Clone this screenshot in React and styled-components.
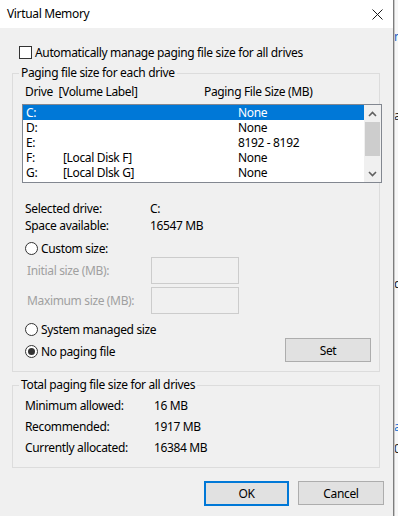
import React from 'react';
import styled, { createGlobalStyle } from 'styled-components';

const drives = [
  { drive: 'C:', label: '', size: 'None' },
  { drive: 'D:', label: '', size: 'None' },
  { drive: 'E:', label: '', size: '8192 - 8192' },
  { drive: 'F:', label: '[Local Disk F]', size: 'None' },
  { drive: 'G:', label: '[Local Dlsk G]', size: 'None' },
];

const totals = [
  ['Minimum allowed:', '16 MB'],
  ['Recommended:', '1917 MB'],
  ['Currently allocated:', '16384 MB'],
];

function CloseIcon() {
  return (
    <svg width="11" height="11" viewBox="0 0 11 11">
      <path d="M0.5 0.5 L10.5 10.5 M10.5 0.5 L0.5 10.5" stroke="#1a1a1a" strokeWidth="1" fill="none" />
    </svg>
  );
}

function Chevron({ down }) {
  return (
    <svg width="9" height="6" viewBox="0 0 9 6">
      <path d={down ? 'M1 1 L4.5 4.5 L8 1' : 'M1 5 L4.5 1.5 L8 5'} stroke="#606060" strokeWidth="1.6" fill="none" />
    </svg>
  );
}

export default function App() {
  return (
    <Screen>
      <GlobalStyle />
      <Dialog>
        <TitleBar>
          <Title>Virtual Memory</Title>
          <CloseBtn><CloseIcon /></CloseBtn>
        </TitleBar>
        <Body>
          <CheckRow>
            <CheckBox />
            <span>Automatically manage paging file size for all drives</span>
          </CheckRow>

          <GroupBox $top={13}>
            <GroupTitle>Paging file size for each drive</GroupTitle>
            <HeaderRow>
              <span>Drive&nbsp;&nbsp;[Volume Label]</span>
              <span>Paging File Size (MB)</span>
            </HeaderRow>
            <ListBox>
              <ListRows>
                {drives.map((d, i) => (
                  <ListRow key={d.drive} $selected={i === 0}>
                    <span>{d.drive}</span>
                    <span>{d.label}</span>
                    <span>{d.size}</span>
                  </ListRow>
                ))}
              </ListRows>
              <ScrollBar>
                <ArrowBox><Chevron /></ArrowBox>
                <Thumb />
                <Track />
                <ArrowBox><Chevron down /></ArrowBox>
              </ScrollBar>
            </ListBox>

            <InfoGrid>
              <span>Selected drive:</span>
              <span>C:</span>
              <span>Space available:</span>
              <span>16547 MB</span>
            </InfoGrid>

            <RadioRow $top={6}>
              <Radio />
              <span>Custom size:</span>
            </RadioRow>
            <SizeRow $top={1}>
              <DisabledLabel>Initial size (MB):</DisabledLabel>
              <DisabledInput />
            </SizeRow>
            <SizeRow $top={3}>
              <DisabledLabel>Maximum size (MB):</DisabledLabel>
              <DisabledInput />
            </SizeRow>
            <RadioRow $top={7}>
              <Radio />
              <span>System managed size</span>
            </RadioRow>
            <SetRow>
              <RadioInline>
                <Radio $checked />
                <span>No paging file</span>
              </RadioInline>
              <Button $w={86}>Set</Button>
            </SetRow>
          </GroupBox>

          <GroupBox $top={13}>
            <GroupTitle>Total paging file size for all drives</GroupTitle>
            <TotalGrid>
              {totals.map(([k, v]) => (
                <React.Fragment key={k}>
                  <span>{k}</span>
                  <span>{v}</span>
                </React.Fragment>
              ))}
            </TotalGrid>
          </GroupBox>

          <ButtonRow>
            <Button $w={85} $default>OK</Button>
            <Button $w={86}>Cancel</Button>
          </ButtonRow>
        </Body>
      </Dialog>
      <Behind>
        <Frag $h={44} $c="#1f5fbf">n</Frag>
        <Frag $h={79} $c="#222">a</Frag>
        <Frag $h={168} $c="#222">d</Frag>
        <Frag $h={143} $c="#1f6fd0">a</Frag>
        <Frag $h={22} $c="#222">0</Frag>
      </Behind>
    </Screen>
  );
}

const GlobalStyle = createGlobalStyle`
  html, body {
    margin: 0;
    padding: 0;
    overflow: hidden;
    background: #ffffff;
  }
  body {
    font-family: "Noto Sans", "Liberation Sans", sans-serif;
    font-size: 12px;
    letter-spacing: -0.35px;
    color: #000;
  }
`;

const Screen = styled.div`
  display: flex;
  width: 398px;
  height: 516px;
  overflow: hidden;
`;

const Dialog = styled.div`
  width: 393px;
  flex: none;
  display: flex;
  flex-direction: column;
  background: #f0f0f0;
  border-right: 1px solid #7d7d7d;
`;

const TitleBar = styled.div`
  height: 28px;
  background: #ffffff;
  display: flex;
  align-items: center;
  justify-content: space-between;
  padding: 0 10px 2px 7px;
  box-sizing: border-box;
`;

const Title = styled.span`
  font-size: 12px;
  color: #000;
`;

const CloseBtn = styled.div`
  display: flex;
  align-items: center;
  padding-top: 2px;
`;

const Body = styled.div`
  padding: 0 9px 0 12px;
  display: flex;
  flex-direction: column;
`;

const CheckRow = styled.div`
  display: flex;
  align-items: center;
  gap: 3px;
  height: 16px;
  margin-top: 16px;
  padding-left: 7px;
`;

const CheckBox = styled.span`
  width: 11px;
  height: 11px;
  border: 1px solid #333;
  background: #fff;
  flex: none;
`;

const GroupBox = styled.div`
  margin-top: ${p => p.$top}px;
  width: 368px;
  box-sizing: border-box;
  border: 1px solid #dcdcdc;
  display: flex;
  flex-direction: column;
  padding-bottom: 9px;
`;

const GroupTitle = styled.div`
  margin: -9px 0 0 6px;
  padding: 0 2px;
  width: fit-content;
  line-height: 16px;
  background: #f0f0f0;
`;

const HeaderRow = styled.div`
  display: grid;
  grid-template-columns: 179px auto;
  height: 16px;
  line-height: 16px;
  margin-top: 3px;
  padding-left: 12px;
`;

const ListBox = styled.div`
  margin: 4px 0 0 9px;
  width: 360px;
  height: 79px;
  box-sizing: border-box;
  border: 1px solid #828790;
  background: #fff;
  display: flex;
`;

const ListRows = styled.div`
  flex: 1;
  display: flex;
  flex-direction: column;
`;

const ListRow = styled.div`
  display: grid;
  grid-template-columns: 37px 175px auto;
  height: 15px;
  line-height: 15px;
  padding-left: 3px;
  overflow: hidden;
  background: ${p => (p.$selected ? '#0078d7' : 'transparent')};
  color: ${p => (p.$selected ? '#fff' : '#000')};
`;

const ScrollBar = styled.div`
  width: 17px;
  flex: none;
  background: #f0f0f0;
  display: flex;
  flex-direction: column;
`;

const ArrowBox = styled.div`
  height: 17px;
  display: flex;
  align-items: center;
  justify-content: center;
  flex: none;
`;

const Thumb = styled.div`
  height: 34px;
  margin: 0 1px;
  background: #cdcdcd;
  flex: none;
`;

const Track = styled.div`
  flex: 1;
`;

const InfoGrid = styled.div`
  display: grid;
  grid-template-columns: 125px auto;
  grid-auto-rows: 17px;
  line-height: 17px;
  margin-top: 17px;
  padding-left: 12px;
`;

const RadioRow = styled.div`
  display: flex;
  align-items: center;
  gap: 3px;
  height: 16px;
  margin-top: ${p => p.$top}px;
  padding-left: 12px;
`;

const RadioInline = styled.div`
  display: flex;
  align-items: center;
  gap: 3px;
  margin-top: 2px;
`;

const Radio = styled.span`
  width: 11px;
  height: 11px;
  border: 1px solid #333;
  border-radius: 50%;
  background: #fff;
  flex: none;
  display: flex;
  align-items: center;
  justify-content: center;
  &::after {
    content: '';
    display: ${p => (p.$checked ? 'block' : 'none')};
    width: 7px;
    height: 7px;
    border-radius: 50%;
    background: #333;
  }
`;

const SizeRow = styled.div`
  display: grid;
  grid-template-columns: 124px 88px;
  align-items: center;
  height: 27px;
  margin-top: ${p => p.$top}px;
  padding-left: 14px;
`;

const DisabledLabel = styled.span`
  color: #a0a0a0;
`;

const DisabledInput = styled.div`
  height: 27px;
  box-sizing: border-box;
  border: 1px solid #cccccc;
  background: #f0f0f0;
`;

const SetRow = styled.div`
  display: flex;
  align-items: center;
  justify-content: space-between;
  margin-top: 1px;
  padding: 0 8px 0 12px;
  height: 24px;
`;

const Button = styled.div`
  width: ${p => p.$w}px;
  height: ${p => (p.$default ? 25 : 24)}px;
  box-sizing: border-box;
  display: flex;
  align-items: center;
  justify-content: center;
  background: #e1e1e1;
  border: ${p => (p.$default ? '2px solid #0078d7' : '1px solid #adadad')};
`;

const TotalGrid = styled.div`
  display: grid;
  grid-template-columns: 129px auto;
  grid-auto-rows: 21px;
  line-height: 21px;
  margin-top: 2px;
  padding-left: 12px;
`;

const ButtonRow = styled.div`
  display: flex;
  justify-content: flex-end;
  gap: 9px;
  margin-top: 13px;
`;

const Behind = styled.div`
  flex: 1;
  background: #f7f7f7;
  border-left: 1px solid #c8c8c8;
  display: flex;
  flex-direction: column;
  overflow: hidden;
`;

const Frag = styled.div`
  height: ${p => p.$h}px;
  display: flex;
  align-items: flex-end;
  font-size: 12px;
  line-height: 14px;
  color: ${p => p.$c};
  margin-left: -1px;
`;
